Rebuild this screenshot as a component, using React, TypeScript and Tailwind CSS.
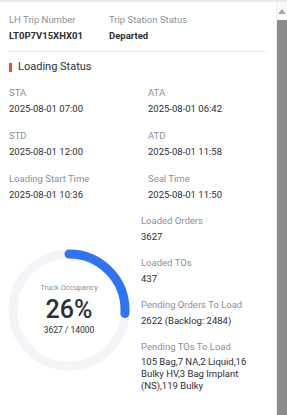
import React from "react";

const Label = ({ children }: { children: React.ReactNode }) => (
  <div className="text-[9.5px] leading-[14px] text-[#8a8f99]">{children}</div>
);
const Value = ({ children, bold }: { children: React.ReactNode; bold?: boolean }) => (
  <div className={`text-[9.5px] leading-[14px] text-[#2b2f36] ${bold ? "font-bold" : ""}`}>{children}</div>
);

function Donut() {
  const r = 56;
  const c = 2 * Math.PI * r;
  const pct = 0.26;
  return (
    <div className="relative w-[122px] h-[122px]">
      <svg width="122" height="122" viewBox="0 0 122 122">
        <circle cx="61" cy="61" r={r} fill="none" stroke="#f2f4f8" strokeWidth="9" />
        <circle
          cx="61"
          cy="61"
          r={r}
          fill="none"
          stroke="#2f74f5"
          strokeWidth="9"
          strokeLinecap="round"
          strokeDasharray={`${c * pct} ${c}`}
          transform="rotate(-90 61 61)"
        />
      </svg>
      <div className="absolute inset-0 flex flex-col items-center justify-center">
        <div className="text-[7.5px] text-[#8a8f99] leading-[10px] mt-[-2px]">Truck Occupancy</div>
        <div className="text-[25px] leading-[30px] text-[#2b2f36] font-medium mt-[2px]">26%</div>
        <div className="text-[8.5px] leading-[11px] text-[#2b2f36]">3627 / 14000</div>
      </div>
    </div>
  );
}

export default function App() {
  return (
    <div
      className="w-[287px] h-[415px] bg-white flex flex-col overflow-hidden"
      style={{ fontFamily: "Roboto, 'Liberation Sans', sans-serif" }}
    >
      <div className="h-[2px] bg-[#e9e7f1] shrink-0" />
      <div className="flex flex-1 min-h-0">
        <div className="flex-1 min-w-0 pl-[9px] pr-[10px] overflow-hidden">
          <div className="flex pt-[11px]">
            <div className="w-[100px]">
              <Label>LH Trip Number</Label>
              <div className="mt-[2px]"><Value bold>LT0P7V15XHX01</Value></div>
            </div>
            <div>
              <Label>Trip Station Status</Label>
              <div className="mt-[2px]"><Value bold>Departed</Value></div>
            </div>
          </div>
          <div className="h-px bg-[#e8e9ec] mt-[8px]" />
          <div className="flex items-center mt-[8px] h-[14px]">
            <div className="w-[3px] h-[9px] bg-[#ee4d2d]" />
            <div className="ml-[6px] text-[11px] text-[#2b2f36] leading-[14px]">Loading Status</div>
          </div>
          <div className="grid grid-cols-[139px_1fr] mt-[12px] gap-y-[13px]">
            <div><Label>STA</Label><div className="mt-[2px]"><Value>2025-08-01 07:00</Value></div></div>
            <div><Label>ATA</Label><div className="mt-[2px]"><Value>2025-08-01 06:42</Value></div></div>
            <div><Label>STD</Label><div className="mt-[2px]"><Value>2025-08-01 12:00</Value></div></div>
            <div><Label>ATD</Label><div className="mt-[2px]"><Value>2025-08-01 11:58</Value></div></div>
            <div><Label>Loading Start Time</Label><div className="mt-[2px]"><Value>2025-08-01 10:36</Value></div></div>
            <div><Label>Seal Time</Label><div className="mt-[2px]"><Value>2025-08-01 11:50</Value></div></div>
          </div>
          <div className="flex mt-[12px]">
            <div className="w-[132px] pt-[35px]">
              <div className="-ml-[1px]"><Donut /></div>
            </div>
            <div className="flex-1 flex flex-col gap-y-[12px]">
              <div><Label>Loaded Orders</Label><div className="mt-[2px]"><Value>3627</Value></div></div>
              <div><Label>Loaded TOs</Label><div className="mt-[2px]"><Value>437</Value></div></div>
              <div><Label>Pending Orders To Load</Label><div className="mt-[2px]"><Value>2622 (Backlog: 2484)</Value></div></div>
              <div>
                <Label>Pending TOs To Load</Label>
                <div className="mt-[2px] text-[9.5px] leading-[12px] text-[#2b2f36] w-[110px]">
                  105 Bag,7 NA,2 Liquid,16 Bulky HV,3 Bag Implant (NS),119 Bulky
                </div>
              </div>
            </div>
          </div>
          <div className="mt-[22px] text-[11px] text-[#2b2f36] leading-[14px]">Trip Info</div>
        </div>
        <div className="w-[11px] shrink-0 border-l border-[#f0f0f0] bg-[#fafafa] flex flex-col items-center">
          <div className="h-[18px] flex items-center justify-center">
            <svg width="8" height="5" viewBox="0 0 8 5"><path d="M0 5 L4 0 L8 5 Z" fill="#a3a3a3" /></svg>
          </div>
          <div className="w-[10px] flex-1 bg-[#8c8c8c]" />
        </div>
      </div>
    </div>
  );
}
